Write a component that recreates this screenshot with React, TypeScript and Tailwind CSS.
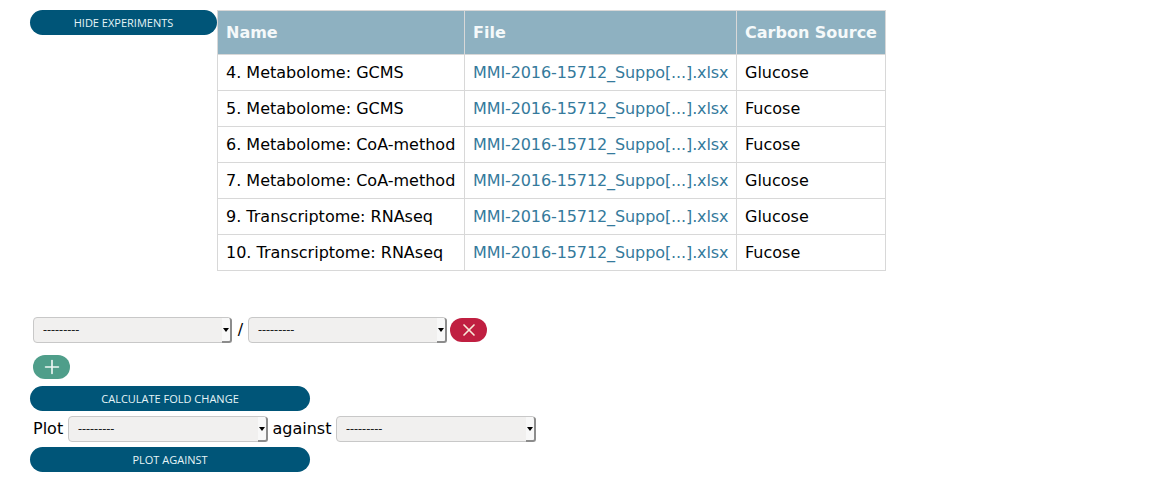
import { Plus, X } from "lucide-react";

const rows = [
  { name: "4. Metabolome: GCMS", source: "Glucose" },
  { name: "5. Metabolome: GCMS", source: "Fucose" },
  { name: "6. Metabolome: CoA-method", source: "Fucose" },
  { name: "7. Metabolome: CoA-method", source: "Glucose" },
  { name: "9. Transcriptome: RNAseq", source: "Glucose" },
  { name: "10. Transcriptome: RNAseq", source: "Fucose" },
];

function PillButton({ label, className }: { label: string; className: string }) {
  return (
    <button
      className={`flex h-[25px] items-center justify-center rounded-[13px] bg-[#005578] pt-[2px] font-['Open_Sans',sans-serif] text-[11px] text-[#e6f4f7] ${className}`}
    >
      {label}
    </button>
  );
}

function Dropdown({ className }: { className: string }) {
  return (
    <div className={`relative h-[26px] ${className}`}>
      <select className="h-full w-full appearance-none rounded-[4px] border border-[#c8c8c8] bg-[#f1f0ef] pl-[9px] font-['Noto_Sans',sans-serif] text-[12.5px] text-[#222]">
        <option>---------</option>
      </select>
      <span className="pointer-events-none absolute top-px right-0 bottom-0 flex w-[10px] items-center justify-center rounded-r-[3px] border-r-2 border-b-2 border-[#8c8c8c] bg-[#f8f8f8]">
        <span className="h-0 w-0 border-x-[3.5px] border-t-[4px] border-x-transparent border-t-black" />
      </span>
    </div>
  );
}

export default function App() {
  return (
    <div className="h-[484px] w-[1167px] bg-white pt-[10px] pl-[30px] font-['DejaVu_Sans',sans-serif] text-[16px] text-black">
      <div className="flex items-start">
        <PillButton label="HIDE EXPERIMENTS" className="w-[187px]" />
        <table className="w-[669px] table-fixed border-collapse">
          <thead>
            <tr className="h-[44px] bg-[#8eb1c1] text-left font-bold text-[#f5f9fa]">
              <th className="w-[247px] border border-[#d8d8d8] pl-2">Name</th>
              <th className="w-[272px] border border-[#d8d8d8] pl-2">File</th>
              <th className="border border-[#d8d8d8] pl-2">Carbon Source</th>
            </tr>
          </thead>
          <tbody>
            {rows.map((row) => (
              <tr key={row.name} className="h-[36px]">
                <td className="border border-[#d8d8d8] pl-2">{row.name}</td>
                <td className="border border-[#d8d8d8] pl-2 tracking-[-0.1px] text-[#357a9c]">
                  MMI-2016-15712_Suppo[...].xlsx
                </td>
                <td className="border border-[#d8d8d8] pl-2">{row.source}</td>
              </tr>
            ))}
          </tbody>
        </table>
      </div>

      <div className="mt-[46px] flex items-center pl-[3px]">
        <Dropdown className="w-[199px]" />
        <span className="w-[16px] pl-px text-center">/</span>
        <Dropdown className="w-[199px]" />
        <button className="ml-[3px] flex h-[24px] w-[37px] items-center justify-center rounded-[12px] bg-[#c01f41] text-[#f8e9d9]">
          <X size={20} strokeWidth={2} />
        </button>
      </div>

      <button className="mt-3 ml-[3px] flex h-[24px] w-[37px] items-center justify-center rounded-[12px] bg-[#4f9e8a] text-[#eef7f4]">
        <Plus size={22} strokeWidth={1.8} />
      </button>

      <PillButton label="CALCULATE FOLD CHANGE" className="mt-[7px] w-[280px]" />

      <div className="mt-[5px] flex items-center pl-[3px]">
        <span className="w-[35px]">Plot</span>
        <Dropdown className="w-[200px]" />
        <span className="w-[68px] text-center">against</span>
        <Dropdown className="w-[200px]" />
      </div>

      <PillButton label="PLOT AGAINST" className="mt-[5px] w-[280px]" />
    </div>
  );
}
